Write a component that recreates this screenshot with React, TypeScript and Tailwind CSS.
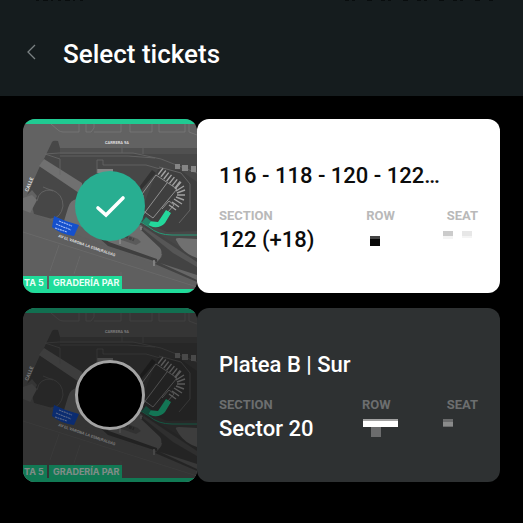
import { useState } from "react";

type Ticket = {
  id: string;
  title: string;
  section: string;
};

const tickets: Ticket[] = [
  { id: "general", title: "116 - 118 - 120 - 122…", section: "122 (+18)" },
  { id: "platea", title: "Platea B | Sur", section: "Sector 20" },
];

// Street map around the stadium
function VenueMap() {
  return (
    <svg viewBox="0 0 174 174" className="block size-full" aria-hidden="true">
      <rect width="174" height="174" fill="#626262" />
      <g fill="none" stroke="#808080" strokeWidth="0.6">
        <path d="M28 5l7 6q2 2 5 2h16V5M63 5v8h5l3-4V5M71 13h27V5M107 5v8h22V5M136 5v8h26V5M166 5v8l8 3" />
      </g>
      {/* city blocks */}
      <path d="M29 23q1-2 6-1l2 7h137v118L55 107 11 95l-2-8 5-10-5-6-5 5 13-29 3-5z" fill="#474747" />
      <path d="M37 29h137v6H37z" fill="#505050" />
      <path d="M21 40l38 24v12L16 47z" fill="#707070" />
      <path d="M0 79l9-3 5 5-9 17-5-2z" fill="#707070" />
      <path d="M54 80q-7 1-9 9l-4 13q1 4 15 8l10-6V82z" fill="#707070" />
      <path d="M74 50h16v4H74z" fill="#858585" />
      <g fill="none" stroke="#686868" strokeWidth="0.8">
        <path d="M22 35l14-1h74l28 6 36 14M22 35l15 5v16M37 37h68l27 2M74 54V41h6v5h43l21 6M99 22v12M120 29v6" />
        <path d="M14 82q2-12 15-11 11 4 11 16-2 12-12 13M20 68l10 4" />
      </g>
      {/* avenues */}
      <path d="M0 91l174 68v15H0z" fill="#5f5f5f" />
      <path d="M51 105l33 12 51 25-3 3-88-33z" fill="#606060" />
      <path d="M62 110l56-4 16 17q7 8 3 17l-5 2-47-18z" fill="#6e6e6e" />
      <path d="M66 110l20 13 48 17v3l-49-16z" fill="#3f3f3f" />
      <path d="M93 111l22 9 3 3-5 3-26-9z" fill="#5a5a5a" />
      <path d="M95 114l16 7" stroke="#444" strokeWidth="3" strokeDasharray="3 1" />
      <path d="M117 110l6-3 51 32v24l-42-18 4-4q6-6 1-12z" fill="#434343" />
      <path d="M121 108l53 35v5l-24-14-30-24z" fill="#565656" />
      <path d="M137 144l37 12v5z" fill="#666" />
      <path d="M153 121q-1-2 3-2l18 1v19q-12-4-18-13z" fill="#707070" />
      <path d="M97 120v5M131 141v6M118 108v3" stroke="#8c8c8c" strokeWidth="1.5" />
      <g fill="none" stroke="#6b6b6b" strokeWidth="0.8">
        <path d="M36 126l-9 26M57 137l-6 18M98 153v17M0 113l174 55" />
      </g>
      {/* stadium */}
      <path d="M118 92l17-42 22 1 17 12v49l-30 1-22-10z" fill="#3f3f3f" />
      <path d="M136 48l22 6 9 11v26l-11 13" fill="none" stroke="#6e6e6e" strokeWidth="0.8" />
      <path d="M117 67l12-16 4 3-15 17z" fill="#323232" />
      <path d="M119 75l14-19 21 14-24 29-11-8M144 64l-24 32M120 76v14M139 90l7-8 5 4-7 8" fill="none" stroke="#909090" strokeWidth="1" />
      <path d="M137 52l18 14" fill="none" stroke="#a2a2a2" strokeWidth="8" strokeDasharray="1.4 2.2" />
      <path d="M152 70l6-7M153 72l8-5M154 74l8-3M154 76l8 0M153 78l8 3M151 80l8 5M149 83l7 5M146 86l7 5" stroke="#a2a2a2" strokeWidth="1.4" />
      <path d="M152 45h5v5h-5zM159 46h6v6h-6zM168 47h5v6h-5z" fill="#858585" />
      <path d="M125 102l10 1 8-12 5 3-6 10q-4 5-12 4l-5-2z" fill="#23d79b" />
      <path d="M119 103l4-5 5 4-3 5z" fill="#23856a" />
      <path d="M118 103l8 5q9 8 23 8h25" fill="none" stroke="#289b78" strokeWidth="1" />
      <path d="M31 97q12 6 25 9l-5 11q-12-1-22-9z" fill="#1450cc" />
      <path d="M36 102l13 5M33 105l15 6M32 109l12 4" stroke="#a4bcf8" strokeWidth="1.1" strokeDasharray="2 .6" />
      <g fill="#dedede" fontFamily="Roboto, sans-serif" fontWeight="700">
        <text x="82" y="25" fontSize="4">CARRERA 9A</text>
        <text fontSize="4" transform="translate(35 118) rotate(19)">AV EL VARONA LA ESMERALDAS</text>
        <text fontSize="5" transform="translate(5 73) rotate(-68)">CALLE</text>
      </g>
      {/* stands */}
      <path d="M0 0h174v5H0z" fill="#20ca92" />
      <path d="M0 157h24v13H0zM26 157h73v13H26zM0 170h174v4H0z" fill="#20dc9a" />
      <g fill="#eafff7" fontFamily="Inter, sans-serif" fontWeight="700" fontSize="9">
        <text x="1" y="167">TA 5</text>
        <text x="30" y="167">GRADERÍA PAR</text>
      </g>
    </svg>
  );
}

// Row and seat numbers are masked
function MaskedRow({ selected }: { selected: boolean }) {
  return selected ? (
    <svg className="block h-6 w-7" viewBox="0 0 28 24" aria-hidden="true">
      <path d="M4 10h10v4H4z" fill="#444" />
      <path d="M4 13h10v7H4z" fill="#080808" />
    </svg>
  ) : (
    <svg className="block h-6 w-9" viewBox="0 0 36 24" aria-hidden="true">
      <path d="M1 4h35v3H1z" fill="#a2a2a2" />
      <path d="M1 6h35v6H1z" fill="#fff" />
      <path d="M9 12h10v10H9z" fill="#6b6c6d" />
    </svg>
  );
}

function MaskedSeat({ selected }: { selected: boolean }) {
  return selected ? (
    <svg className="-ml-1 block h-6 w-8" viewBox="0 0 32 24" aria-hidden="true">
      <path d="M0 5h10v5H0z" fill="#cbcbcb" />
      <path d="M0 10h10v3H0zM19 10h10v2H19z" fill="#f4f4f4" />
      <path d="M19 5h10v5H19z" fill="#e7e7e7" />
    </svg>
  ) : (
    <svg className="-ml-1 block h-6 w-8" viewBox="0 0 32 24" aria-hidden="true">
      <path d="M0 4h10v8H0z" fill="#6b6c6d" />
      <path d="M0 7h10v4H0z" fill="#8a8b8b" />
    </svg>
  );
}

interface TicketCardProps {
  ticket: Ticket;
  selected: boolean;
  onToggle: () => void;
}

function TicketCard({ ticket, selected, onToggle }: TicketCardProps) {
  const labelClass = selected ? "text-[#b9b9b9]" : "text-[#6c6e6f]";

  return (
    <li className="flex">
      <div className="relative size-[174px] shrink-0 overflow-hidden rounded-xl">
        <VenueMap />
        {!selected && <div className="absolute inset-0 bg-black/45" />}
        <div className="absolute inset-0 flex items-center justify-center">
          <input
            id={ticket.id}
            type="checkbox"
            checked={selected}
            onChange={onToggle}
            className="size-[70px] cursor-pointer appearance-none rounded-full border-3 border-[#a3a3a3] bg-black checked:border-0 checked:bg-[#28ae91]"
          />
        </div>
        {selected && (
          <svg
            viewBox="0 0 174 174"
            className="pointer-events-none absolute inset-0"
            fill="none"
            stroke="#fff"
            strokeWidth="3.6"
            strokeLinecap="round"
            aria-hidden="true"
          >
            <path d="M75 89l8 7 17-17" />
          </svg>
        )}
      </div>
      <label
        htmlFor={ticket.id}
        className={`flex min-w-0 flex-1 cursor-pointer flex-col justify-center rounded-xl px-[22px] pt-1 ${
          selected ? "bg-white text-[#0c0c0c]" : "bg-[#2e3132] text-white"
        }`}
      >
        <span className="truncate text-[22px] leading-7 font-medium">{ticket.title}</span>
        <span className="mt-4 flex justify-between">
          <span>
            <span className={`block text-[13px] leading-5 font-bold ${labelClass}`}>SECTION</span>
            <span className="block text-[22px] leading-7 font-medium">{ticket.section}</span>
          </span>
          <span>
            <span className={`block text-[13px] leading-5 font-bold ${labelClass}`}>ROW</span>
            <MaskedRow selected={selected} />
          </span>
          <span>
            <span className={`block text-[13px] leading-5 font-bold ${labelClass}`}>SEAT</span>
            <MaskedSeat selected={selected} />
          </span>
        </span>
      </label>
    </li>
  );
}

export default function App() {
  const [selectedIds, setSelectedIds] = useState<string[]>(["general"]);

  const toggle = (id: string) =>
    setSelectedIds((ids) => (ids.includes(id) ? ids.filter((i) => i !== id) : [...ids, id]));

  return (
    <div className="min-h-screen bg-black font-['Roboto',sans-serif]">
      <header className="relative flex h-24 items-center bg-[#151c1e] pt-3 pr-6 pl-6">
        {/* lower edge of the status bar */}
        <div className="absolute inset-x-0 top-0 flex justify-between pr-7 pl-9" aria-hidden="true">
          <svg width="50" height="2" stroke="#090d0e" strokeWidth="2" strokeDasharray="3 4 5 3 2 5">
            <path d="M0 0h50" />
          </svg>
          <svg width="150" height="2" stroke="#090d0e" strokeWidth="2" strokeDasharray="4 3 3 12 5 9">
            <path d="M0 0h150" />
          </svg>
        </div>
        <button type="button" aria-label="Back" className="mr-6 cursor-pointer">
          <svg viewBox="0 0 15 20" className="block h-5 w-[15px]" fill="none" stroke="#7b8284" strokeWidth="1.3" aria-hidden="true">
            <path d="M11 1L4 8l7 7" />
          </svg>
        </button>
        <h1 className="text-[26px] leading-8 font-medium text-white">Select tickets</h1>
      </header>
      <ul className="flex flex-col gap-[15px] px-[23px] pt-[23px] pb-10">
        {tickets.map((ticket) => (
          <TicketCard
            key={ticket.id}
            ticket={ticket}
            selected={selectedIds.includes(ticket.id)}
            onToggle={() => toggle(ticket.id)}
          />
        ))}
      </ul>
    </div>
  );
}
